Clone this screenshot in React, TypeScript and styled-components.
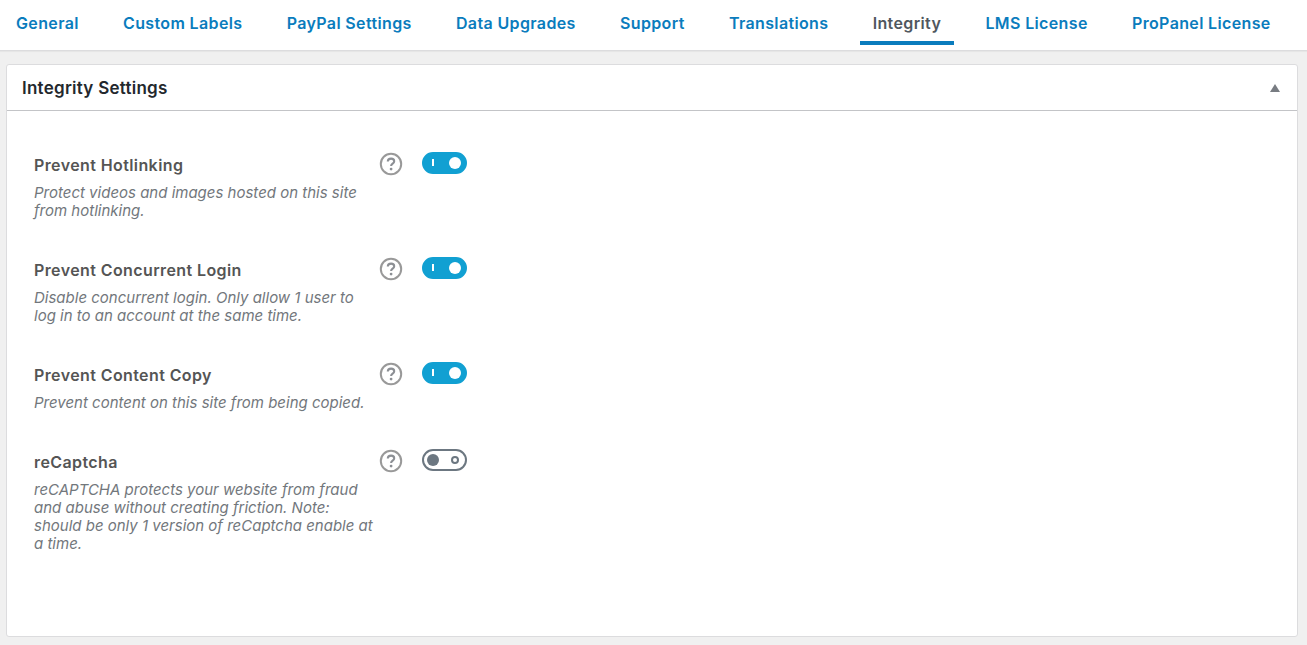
import { createGlobalStyle } from "styled-components";
import styled from "styled-components";

const GlobalStyle = createGlobalStyle`
  html, body {
    margin: 0;
    padding: 0;
    height: 100%;
    overflow: hidden;
    background: #f0f0f0;
    font-family: Inter, "Liberation Sans", sans-serif;
  }
`;

const TabBar = styled.nav`
  display: flex;
  height: 50px;
  padding-left: 3px;
  gap: 18.25px;
  background: #fff;
  border-bottom: 1px solid #dcdcde;
  box-shadow: 0 1px 1px rgba(0, 0, 0, 0.04);
`;

const Tab = styled.a<{ $active?: boolean }>`
  height: 45px;
  box-sizing: border-box;
  padding: 14px 13px 0;
  font-size: 16px;
  letter-spacing: 0.36px;
  line-height: 19px;
  font-weight: 600;
  white-space: nowrap;
  color: ${(p) => (p.$active ? "#50575e" : "#0a7cbd")};
  border-bottom: 4px solid ${(p) => (p.$active ? "#0a7cbd" : "transparent")};
`;

const Panel = styled.section`
  margin: 13px 9px 0 6px;
  height: 573px;
  box-sizing: border-box;
  background: #fff;
  border: 1px solid #dcdcde;
  border-radius: 3px;
`;

const PanelHeader = styled.header`
  display: flex;
  align-items: center;
  justify-content: space-between;
  height: 46px;
  box-sizing: border-box;
  padding: 0 17px 0 15px;
  border-bottom: 1px solid #c3c4c7;
`;

const PanelTitle = styled.h2`
  margin: 0;
  font-size: 17px;
  letter-spacing: 0.25px;
  line-height: 20px;
  font-weight: 600;
  color: #23282d;
`;

const CollapseArrow = styled.span`
  width: 0;
  height: 0;
  border-left: 5.5px solid transparent;
  border-right: 5.5px solid transparent;
  border-bottom: 8px solid #787c82;
`;

const Settings = styled.div`
  padding: 45px 0 0 27px;
`;

const Row = styled.div<{ $gap: number }>`
  display: flex;
  align-items: flex-start;
  margin-bottom: ${(p) => p.$gap}px;
`;

const TextColumn = styled.div`
  width: 346px;
`;

const RowTitle = styled.h3`
  margin: -1px 0 9px;
  font-size: 16px;
  letter-spacing: 0.4px;
  line-height: 20px;
  font-weight: 600;
  color: #555;
`;

const Description = styled.p`
  margin: 0;
  font-size: 15px;
  line-height: 18px;
  font-style: italic;
  color: #72777c;
  white-space: nowrap;
`;

const HelpIcon = styled.svg`
  flex: none;
  width: 24px;
  height: 24px;
  margin: -4px 0 0 -1px;
`;

const Toggle = styled.span<{ $on?: boolean }>`
  position: relative;
  flex: none;
  display: block;
  width: 45px;
  height: 22px;
  margin: -4px 0 0 19px;
  box-sizing: border-box;
  border-radius: 11px;
  background: ${(p) => (p.$on ? "#11a0d2" : "#fff")};
  border: 2px solid ${(p) => (p.$on ? "#11a0d2" : "#6c7781")};
`;

const Knob = styled.span<{ $on?: boolean }>`
  position: absolute;
  top: 50%;
  transform: translateY(-50%);
  border-radius: 50%;
  width: 12px;
  height: 12px;
  left: ${(p) => (p.$on ? "25px" : "3px")};
  background: ${(p) => (p.$on ? "#fff" : "#6c7781")};
`;

const OnMark = styled.span`
  position: absolute;
  top: 5px;
  left: 8px;
  width: 2px;
  height: 7px;
  background: #fff;
`;

const OffMark = styled.span`
  position: absolute;
  top: 5px;
  right: 6px;
  width: 8px;
  height: 8px;
  box-sizing: border-box;
  border: 2px solid #6c7781;
  border-radius: 50%;
`;

function Help() {
  return (
    <HelpIcon viewBox="0 0 24 24" fill="none">
      <circle cx="12" cy="12" r="10.2" stroke="#999" strokeWidth="2" />
      <path
        d="M8.8 9.6c0-1.9 1.4-3 3.3-3 1.8 0 3.1 1 3.1 2.7 0 2.3-3.1 2.3-3.1 4.6"
        stroke="#8c8f94"
        strokeWidth="2.1"
      />
      <circle cx="12.1" cy="17.1" r="1.4" fill="#8c8f94" />
    </HelpIcon>
  );
}

const tabs = [
  "General",
  "Custom Labels",
  "PayPal Settings",
  "Data Upgrades",
  "Support",
  "Translations",
  "Integrity",
  "LMS License",
  "ProPanel License",
];

const rows = [
  {
    title: "Prevent Hotlinking",
    lines: ["Protect videos and images hosted on this site", "from hotlinking."],
    on: true,
    gap: 41,
  },
  {
    title: "Prevent Concurrent Login",
    lines: ["Disable concurrent login. Only allow 1 user to", "log in to an account at the same time."],
    on: true,
    gap: 41,
  },
  {
    title: "Prevent Content Copy",
    lines: ["Prevent content on this site from being copied."],
    on: true,
    gap: 41,
  },
  {
    title: "reCaptcha",
    lines: [
      "reCAPTCHA protects your website from fraud",
      "and abuse without creating friction. Note:",
      "should be only 1 version of reCaptcha enable at",
      "a time.",
    ],
    on: false,
    gap: 0,
  },
];

export default function App() {
  return (
    <>
      <GlobalStyle />
      <TabBar>
        {tabs.map((t) => (
          <Tab key={t} $active={t === "Integrity"}>
            {t}
          </Tab>
        ))}
      </TabBar>
      <Panel>
        <PanelHeader>
          <PanelTitle>Integrity Settings</PanelTitle>
          <CollapseArrow />
        </PanelHeader>
        <Settings>
          {rows.map((r) => (
            <Row key={r.title} $gap={r.gap}>
              <TextColumn>
                <RowTitle>{r.title}</RowTitle>
                <Description>
                  {r.lines.map((l) => (
                    <span key={l}>
                      {l}
                      <br />
                    </span>
                  ))}
                </Description>
              </TextColumn>
              <Help />
              <Toggle $on={r.on}>
                {r.on ? <OnMark /> : <OffMark />}
                <Knob $on={r.on} />
              </Toggle>
            </Row>
          ))}
        </Settings>
      </Panel>
    </>
  );
}
